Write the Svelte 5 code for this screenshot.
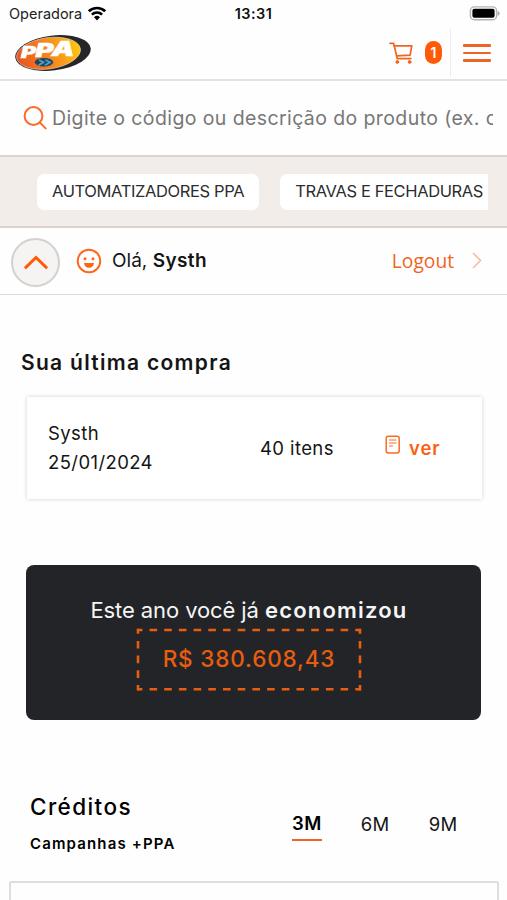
<script lang="ts">
    type Period = {
        label: string;
        months: number;
    }

    const categories = ["AUTOMATIZADORES PPA", "TRAVAS E FECHADURAS"];
    const periods: Period[] = [
        { label: "3M", months: 3 },
        { label: "6M", months: 6 },
        { label: "9M", months: 9 },
    ];

    let cartCount = $state(1);
    let selected = $state(3);
    let search = $state("");
</script>

<div class="screen">
    <div class="status-bar">
        <span class="carrier">
            Operadora
            <svg width="20" height="15" viewBox="0 0 20 15" fill="none" stroke="#000" stroke-width="2.7">
                <path d="M1.8 5.3a11.8 11.8 0 0 1 16.4 0" />
                <path d="M4.9 8.6a7.3 7.3 0 0 1 10.2 0" />
                <path d="M10 14.4l-3-3.1a4.3 4.3 0 0 1 6 0z" fill="#000" stroke="none" />
            </svg>
        </span>
        <span class="time">13:31</span>
        <svg class="battery" width="31" height="15" viewBox="0 0 31 15">
            <rect x="1.4" y="0.9" width="26.2" height="12.8" rx="3.8" fill="#fff" stroke="#b3b3b3" stroke-width="1.4" />
            <rect x="3.4" y="2.8" width="22.2" height="9" rx="2" fill="#000" />
            <path d="M28.6 5v5q2-.8 2-2.5t-2-2.5z" fill="#aaa" />
        </svg>
    </div>

    <header>
        <svg class="logo" width="78" height="38" viewBox="0 0 78 38">
            <defs>
                <linearGradient id="logo-fill" x1="0" y1="0.4" x2="1" y2="0.3">
                    <stop offset="0" stop-color="#e8571f" />
                    <stop offset="0.45" stop-color="#f5821f" />
                    <stop offset="1" stop-color="#fdc90f" />
                </linearGradient>
            </defs>
            <ellipse cx="39" cy="19" rx="38" ry="17.4" fill="#26262a" transform="rotate(-7 39 19)" />
            <ellipse cx="34.5" cy="19.3" rx="32.2" ry="15.6" fill="url(#logo-fill)" stroke="#f7d9bd" stroke-width="0.6" transform="rotate(-8 34.5 19.3)" />
            <ellipse cx="30" cy="28.3" rx="9.2" ry="4.2" fill="#24435a" />
            <path d="M25 26l4.5 2.3-5 3M31.500 26l4.500 2.300-5 3" fill="none" stroke="#45a3cf" stroke-width="1.8" />
            <g class="logo-text">
                <text x="7" y="23.6" font-size="15.5" textLength="15" lengthAdjust="spacingAndGlyphs">P</text>
                <text x="21.5" y="23" font-size="18.5" textLength="18" lengthAdjust="spacingAndGlyphs">P</text>
                <text x="37.5" y="22.4" font-size="20.5" textLength="23" lengthAdjust="spacingAndGlyphs">A</text>
            </g>
        </svg>
        <div class="cart">
            <svg width="24" height="22" viewBox="0 0 24 22" fill="none" stroke="#f2641f" stroke-width="1.7" stroke-linejoin="round" stroke-linecap="round">
                <path d="M1 1.3h3.6l3.7 15.400h13.500" />
                <path d="M5.3 3.8h17.5l-1.7 9.3-13.3.7" />
                <circle cx="8.3" cy="20" r="1.4" fill="#f2641f" stroke-width="1" />
                <circle cx="20.6" cy="20" r="1.4" fill="#f2641f" stroke-width="1" />
            </svg>
            <span class="cart-count">{cartCount}</span>
        </div>
        <button class="menu" aria-label="Menu">
            <span></span>
            <span></span>
            <span></span>
        </button>
    </header>

    <div class="search">
        <svg width="24" height="24" viewBox="0 0 24 24" fill="none" stroke="#fb6a2a" stroke-width="2" stroke-linecap="round">
            <circle cx="10.5" cy="10" r="8.9" />
            <path d="M16.8 16.4l5.8 6" />
        </svg>
        <input type="text" bind:value={search} placeholder="Digite o código ou descrição do produto (ex. central)" />
    </div>

    <nav>
        <div class="categories">
            {#each categories as category (category)}
            <a href="#top">{category}</a>
            {/each}
        </div>
    </nav>

    <div class="user">
        <button class="collapse" aria-label="Recolher">
            <svg width="24" height="14" viewBox="0 0 24 14" fill="none" stroke="#ff5a0a" stroke-width="3" stroke-linecap="round">
                <path d="M1.8 12.3L12 2.5l10.2 9.8" />
            </svg>
        </button>
        <svg class="smile" width="26" height="26" viewBox="0 0 26 26">
            <circle cx="13" cy="13" r="11.3" fill="none" stroke="#ff6417" stroke-width="1.9" />
            <circle cx="9" cy="10.8" r="1.5" fill="#ff6417" />
            <circle cx="17" cy="10.8" r="1.5" fill="#ff6417" />
            <path d="M8 15h10q-.6 4.800-5 4.800t-5-4.800z" fill="#ff6417" />
        </svg>
        <p class="hello">Olá, <b>Systh</b></p>
        <a class="logout" href="#top">
            Logout
            <svg width="10" height="17" viewBox="0 0 10 17" fill="none" stroke="#f9bda0" stroke-width="1.7">
                <path d="M1 1l7.5 7.5L1 16" />
            </svg>
        </a>
    </div>

    <main>
        <h2>Sua última compra</h2>
        <div class="order">
            <div class="order-info">
                <p>Systh</p>
                <p>25/01/2024</p>
            </div>
            <p class="order-items">40 itens</p>
            <a class="order-link" href="#top">
                <svg width="16" height="20" viewBox="0 0 16 20" fill="none" stroke="#fb6a25" stroke-width="1.5" stroke-linecap="round">
                    <rect x="1.2" y="1.2" width="13" height="16.8" rx="2.2" />
                    <path d="M4.5 5h6.5M4.5 8h6.5M4.5 11h3" stroke-width="1.2" />
                </svg>
                ver
            </a>
        </div>

        <div class="savings">
            <p class="savings-title">Este ano você já <b>economizou</b></p>
            <div class="savings-value">
                <svg width="226" height="63" viewBox="0 0 226 63" fill="none" stroke="#e85d10" stroke-width="2.6">
                    <path d="M1.3 2h223.4" stroke-dasharray="7.6 7.1" stroke-dashoffset="2.5" />
                    <path d="M1.3 61.3h223.4" stroke-dasharray="7.6 7.1" stroke-dashoffset="2.5" />
                    <path d="M2 0.7v61.9" stroke-dasharray="7.6 7.1" stroke-dashoffset="2.5" />
                    <path d="M224 0.7v61.9" stroke-dasharray="7.6 7.1" stroke-dashoffset="2.5" />
                </svg>
                <strong>R$ 380.608,43</strong>
            </div>
        </div>

        <div class="credits">
            <div class="credits-title">
                <h3>Créditos</h3>
                <p>Campanhas +PPA</p>
            </div>
            <div class="periods">
                {#each periods as period (period.months)}
                <button class:active={selected === period.months} onclick={() => (selected = period.months)}>{period.label}</button>
                {/each}
            </div>
        </div>
        <div class="chart"></div>
    </main>
</div>

<style>
    :global(body) {
        margin: 0;
        background: #fff;
    }

    .screen {
        width: 507px;
        height: 900px;
        overflow: hidden;
        box-sizing: border-box;
        background: #fefefe;
        color: #151515;
        font-family: Inter, "Liberation Sans", sans-serif;

        & p, & h2, & h3 {
            margin: 0;
        }

        & button {
            border: none;
            background: none;
            padding: 0;
            font-family: inherit;
            color: inherit;
        }

        & a {
            text-decoration: none;
        }

        & svg {
            display: block;
            flex: none;
        }
    }

    .status-bar {
        display: grid;
        grid-template-columns: 1fr auto 1fr;
        align-items: center;
        height: 27px;
        padding: 0 7px 0 9px;
        font-size: 14.5px;
        color: #222;
    }

    .carrier {
        display: flex;
        gap: 5px;
        align-items: center;
    }

    .time {
        margin-left: -2px;
        font-weight: 600;
        letter-spacing: 0.4px;
        color: #111;
    }

    .battery {
        justify-self: end;
    }

    header {
        display: flex;
        align-items: center;
        height: 52px;
        padding-left: 14px;
        border-bottom: 2px solid #e3e2e2;
    }

    .logo-text {
        font-family: Inter, sans-serif;
        font-weight: 900;
        font-style: italic;
        fill: #fff;
        stroke: #fff;
        stroke-width: 0.5;
    }

    .cart {
        display: flex;
        gap: 12px;
        align-items: center;
        margin-left: auto;
        margin-right: 8px;
        padding-bottom: 1px;
    }

    .cart-count {
        width: 17px;
        height: 23px;
        border-radius: 9px;
        background: #ff5a06;
        color: #fff;
        font-size: 14px;
        font-weight: 600;
        line-height: 23px;
        text-align: center;
    }

    .screen .menu {
        display: flex;
        flex-direction: column;
        justify-content: center;
        gap: 5px;
        box-sizing: border-box;
        width: 57px;
        height: 48px;
        padding-left: 12px;
        border-left: 1px solid #eee;

        & span {
            width: 28px;
            height: 2.5px;
            border-radius: 1px;
            background: #ec6426;
        }
    }

    .search {
        display: flex;
        align-items: center;
        gap: 5px;
        height: 74px;
        padding: 0 14px 0 23px;

        & input {
            flex: 1;
            min-width: 0;
            padding: 0;
            border: none;
            outline: none;
            background: none;
            font-family: inherit;
            font-size: 19.5px;
            letter-spacing: 0.4px;
        }

        & input::placeholder {
            color: #777;
        }
    }

    nav {
        height: 69px;
        padding: 0 19px 0 37px;
        border-top: 2px solid #d9d4d1;
        border-bottom: 2px solid #d9d3d1;
        background: #f2ede9;
    }

    .categories {
        display: flex;
        align-items: center;
        gap: 21px;
        height: 70px;
        overflow: hidden;

        & a {
            flex: none;
            height: 36px;
            padding: 0 15px;
            border-radius: 7px;
            background: #fff;
            color: #2b2d2f;
            font-size: 16.5px;
            line-height: 35px;
            letter-spacing: -0.38px;
        }
    }

    .user {
        display: flex;
        align-items: center;
        height: 66px;
        padding: 0 25px 0 11px;
        border-bottom: 1px solid #dcdcdc;

        & .collapse {
            display: grid;
            place-items: center;
            box-sizing: border-box;
            width: 49px;
            height: 49px;
            margin-top: 2px;
            border: 2px solid #d3d1cf;
            border-radius: 50%;
            background: #f5f4f3;
        }
    }

    .smile {
        margin-left: 16px;
    }

    .user .hello {
        margin: -2px 0 0 10px;
        font-size: 19px;

        & b {
            font-weight: 600;
            letter-spacing: 0.4px;
        }
    }

    .logout {
        display: flex;
        align-items: center;
        gap: 18px;
        margin-left: auto;
        margin-top: -2px;
        color: #f0641f;
        font-family: "Open Sans", sans-serif;
        font-size: 19.2px;
    }

    .screen h2 {
        margin: 54px 0 0 21px;
        font-size: 21px;
        font-weight: 600;
        line-height: 28px;
        letter-spacing: 1.3px;
    }

    .order {
        display: flex;
        box-sizing: border-box;
        width: 455px;
        height: 102px;
        margin: 20px 0 0 27px;
        padding-left: 21px;
        align-items: center;
        box-shadow: 0 0 4px rgba(0, 0, 0, 0.18);
        background: #fff;
        font-size: 18.5px;
        line-height: 29px;
        letter-spacing: 0.4px;
    }

    .order-info {
        width: 212px;
    }

    .order-items {
        width: 125px;
    }

    .order-link {
        display: flex;
        gap: 8px;
        color: #fb5f12;
        font-weight: 600;
        letter-spacing: 0.9px;

        & svg {
            margin-top: 1px;
        }
    }

    .savings {
        display: flex;
        flex-direction: column;
        align-items: center;
        box-sizing: border-box;
        width: 455px;
        height: 155px;
        margin: 66px 0 0 26px;
        padding: 30px 9px 0 0;
        border-radius: 8px;
        background: #232427;
        color: #f5f5f5;
    }

    .savings-title {
        font-size: 22px;
        line-height: 30px;
        letter-spacing: -0.1px;
        white-space: nowrap;

        & b {
            font-weight: 600;
            letter-spacing: 1.2px;
        }
    }

    .savings-value {
        display: grid;
        place-items: center;
        margin-top: 3px;
        color: #e85d10;
        font-size: 22.5px;

        & svg, & strong {
            grid-area: 1 / 1;
        }

        & strong {
            margin-top: -2px;
            font-weight: 500;
            letter-spacing: 0.85px;
        }
    }

    .credits {
        display: flex;
        height: 96px;
        margin-top: 65px;
        padding-left: 30px;
    }

    .credits-title {
        width: 262px;

        & h3 {
            padding-top: 8px;
            font-size: 22.5px;
            font-weight: 500;
            line-height: 28px;
            letter-spacing: 1.4px;
            color: #000;
        }

        & p {
            padding-top: 13px;
            font-size: 15px;
            font-weight: 600;
            line-height: 20px;
            letter-spacing: 1.15px;
            color: #000;
        }
    }

    .periods {
        display: flex;
        gap: 39px;
        align-items: flex-start;
        padding-top: 23px;

        & button {
            box-sizing: border-box;
            height: 33px;
            font-size: 18.5px;
            line-height: 31px;
            letter-spacing: 0.4px;
        }

        & .active {
            border-bottom: 2.5px solid #ef6328;
            font-weight: 600;
            color: #000;
        }
    }

    .chart {
        box-sizing: border-box;
        width: 490px;
        height: 60px;
        margin-left: 9px;
        border: 2px solid #dedede;
        border-radius: 2px;
    }
</style>
